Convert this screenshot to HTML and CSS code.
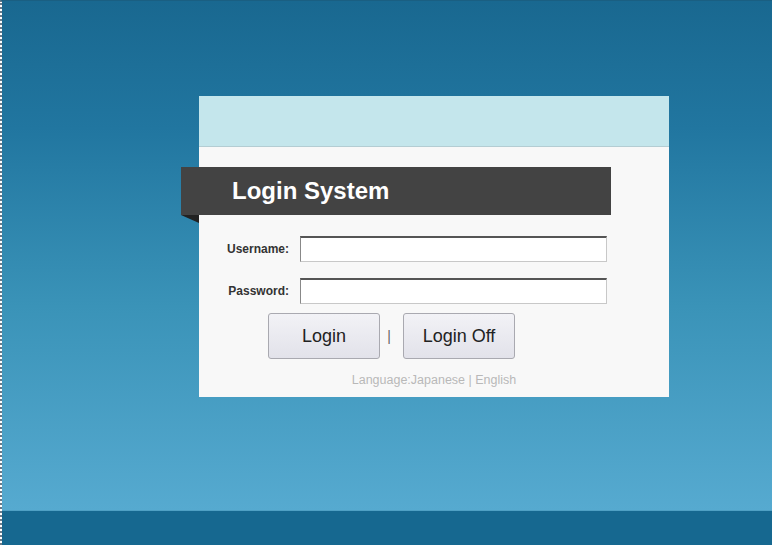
FILE: index.html
```html
<!DOCTYPE html>
<html>
<head>
<meta charset="utf-8">
<link rel="stylesheet" href="styles.css">
</head>
<body>
<div class="page">
  <div class="main">
    <div class="card">
      <div class="card-head"></div>
      <div class="card-body">
        <div class="banner"><span class="banner-title">Login System</span></div>
        <div class="row row-user">
          <label class="lbl">Username:</label>
          <input class="field" type="text">
        </div>
        <div class="row row-pass">
          <label class="lbl">Password:</label>
          <input class="field" type="password">
        </div>
        <div class="buttons">
          <button class="btn">Login</button>
          <span class="sep">|</span>
          <button class="btn">Login Off</button>
        </div>
        <div class="lang">Language:Japanese | English</div>
      </div>
    </div>
  </div>
  <div class="footer"></div>
</div>
</body>
</html>
```
FILE: styles.css
```css
html, body {
  margin: 0;
  padding: 0;
}
body {
  width: 772px;
  height: 545px;
  overflow: hidden;
  font-family: "Liberation Sans", Arial, sans-serif;
}
.page {
  height: 545px;
  display: flex;
  flex-direction: column;
  border-left: 2px dotted #6a7a88;
  border-top: 1px solid #1a5f82;
  box-sizing: border-box;
}
.main {
  flex: 1;
  background: linear-gradient(to bottom, #196890 0%, #2176a0 25%, #3a93b8 60%, #56aad0 100%);
  padding-top: 95px;
  padding-left: 197px;
  box-sizing: border-box;
}
.footer {
  height: 34px;
  background: #166890;
  border-top: 1px solid #4fa0c4;
}
.card {
  width: 470px;
  background: #f8f8f8;
}
.card-head {
  height: 50px;
  background: #c4e6ec;
  border-bottom: 1px solid #b4cdd3;
}
.card-body {
  padding-top: 20px;
  padding-bottom: 9px;
}
.banner {
  position: relative;
  margin-left: -18px;
  width: 430px;
  height: 48px;
  background: #434343;
  display: flex;
  align-items: center;
  box-sizing: border-box;
  padding-left: 51px;
}
.banner::after {
  content: "";
  position: absolute;
  left: 0;
  top: 48px;
  border-top: 8px solid #222;
  border-left: 18px solid transparent;
}
.banner-title {
  color: #ffffff;
  font-weight: bold;
  font-size: 24px;
}
.row {
  display: flex;
  align-items: center;
}
.row-user {
  margin-top: 21px;
}
.row-pass {
  margin-top: 16px;
}
.lbl {
  width: 101px;
  flex: none;
  text-align: right;
  font-size: 12px;
  font-weight: bold;
  color: #333;
  padding-right: 11px;
  box-sizing: border-box;
}
.field {
  width: 307px;
  height: 26px;
  margin: 0;
  box-sizing: border-box;
  background: #fff;
  border: 1px solid #c8c8c8;
  border-top: 2px solid #555;
  border-left: 1px solid #888;
  outline: none;
}
.buttons {
  display: flex;
  align-items: center;
  margin-top: 9px;
  padding-left: 69px;
}
.btn {
  width: 112px;
  height: 46px;
  margin: 0;
  box-sizing: border-box;
  border: 1px solid #a9a9b0;
  border-radius: 3px;
  background: linear-gradient(to bottom, #f2f2f6, #e2e2ea);
  font-family: "Liberation Sans", Arial, sans-serif;
  font-size: 18px;
  color: #222;
}
.sep {
  width: 18px;
  margin-right: 5px;
  text-align: center;
  color: #666;
  font-size: 14px;
}
.lang {
  margin-top: 13px;
  text-align: center;
  font-size: 12.5px;
  color: #b8b8b8;
  line-height: 16px;
}
```
